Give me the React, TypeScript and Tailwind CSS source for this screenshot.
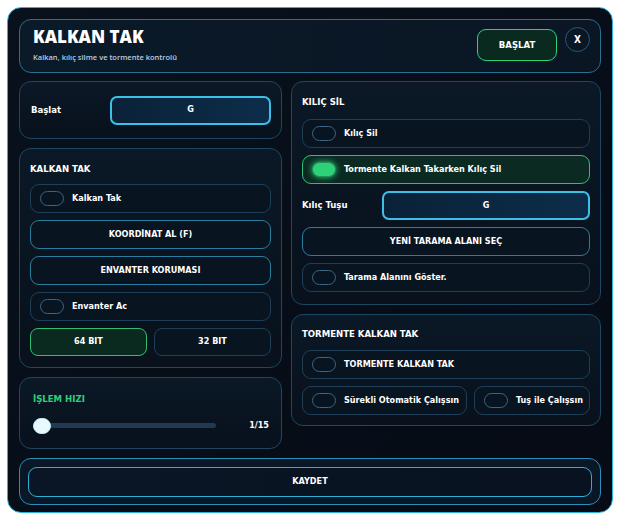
import React from "react";

const font = { fontFamily: '"DejaVu Sans Condensed", "DejaVu Sans", sans-serif' };
const titleFont = { fontFamily: '"Open Sans", "Noto Sans", sans-serif' };

function Toggle({ on = false }: { on?: boolean }) {
  return on ? (
    <span className="inline-block w-[24px] h-[15px] rounded-full bg-[#2fd07a] border border-[#1f8f52] shadow-[0_0_6px_#2fd07a] shrink-0" />
  ) : (
    <span className="inline-block w-[24px] h-[15px] rounded-full border border-[#3a6684] shrink-0" />
  );
}

function ToggleRow({ label, on = false, className = "" }: { label: string; on?: boolean; className?: string }) {
  return (
    <div
      className={
        "h-[29px] rounded-[9px] border flex items-center pl-[9px] gap-[8px] whitespace-nowrap " +
        (on ? "border-[#2fbf74] bg-[#0b2a22] " : "border-[#1f3f58] bg-[#081420] ") +
        className
      }
    >
      <Toggle on={on} />
      <span className="text-[9px] font-bold text-white">{label}</span>
    </div>
  );
}

function Btn({ label, className = "" }: { label: string; className?: string }) {
  return (
    <div
      className={
        "h-[29px] rounded-[9px] border border-[#2a7d9f] bg-[#081420] flex items-center justify-center text-[9px] font-bold text-white " +
        className
      }
    >
      {label}
    </div>
  );
}

function KeyInput({ className = "" }: { className?: string }) {
  return (
    <div
      className={
        "h-[29px] rounded-[7px] border-2 border-[#3cc0e8] bg-gradient-to-r from-[#0a2238] to-[#0c2d4a] flex items-center justify-center text-[9px] font-bold text-white " +
        className
      }
    >
      G
    </div>
  );
}

function Card({ children, className = "" }: { children: React.ReactNode; className?: string }) {
  return (
    <div
      className={
        "rounded-[12px] border border-[#1d4763] bg-gradient-to-b from-[#0b1826] to-[#08111c] " + className
      }
    >
      {children}
    </div>
  );
}

export default function App() {
  return (
    <div className="w-[620px] h-[520px] bg-white p-[7px]" style={font}>
      <div className="w-[606px] h-[506px] rounded-[14px] border border-[#2ab3d8] bg-gradient-to-br from-[#08111c] to-[#060b15] px-[11px] pt-[11px] flex flex-col">
        {/* Header */}
        <div className="h-[54px] rounded-[12px] border border-[#2a6f92] bg-gradient-to-r from-[#0a1a29] to-[#0a1624] flex items-center pl-[13px] pr-[10px]">
          <div className="flex-1 flex flex-col">
            <div className="text-[17px] font-extrabold text-white leading-[20px] mt-[-1px]" style={titleFont}>KALKAN TAK</div>
            <div className="text-[7.5px] font-semibold text-[#b9cce0] mt-[5px]" style={titleFont}>Kalkan, kılıç silme ve tormente kontrolü</div>
          </div>
          <div className="w-[80px] h-[32px] rounded-[9px] border border-[#2fd07a] bg-[#0a2a20] flex items-center justify-center text-[9.5px] font-bold text-white mt-[-2px]">
            BAŞLAT
          </div>
          <div className="ml-[8px] w-[25px] h-[25px] rounded-full border border-[#2a5876] flex items-center justify-center text-[10px] font-extrabold text-white mt-[-14px]">
            X
          </div>
        </div>

        <div className="flex gap-[9px] mt-[8px]">
          {/* Left column */}
          <div className="w-[263px] flex flex-col gap-[9px]">
            <Card className="h-[58px] flex items-center pl-[11px] pr-[10px]">
              <span className="text-[9.5px] font-bold text-white w-[79px]">Başlat</span>
              <KeyInput className="flex-1" />
            </Card>

            <Card className="h-[220px] px-[10px] pt-[14px]">
              <div className="text-[9.5px] font-bold text-white leading-[12px]">KALKAN TAK</div>
              <div className="flex flex-col gap-[7px] mt-[9px]">
                <ToggleRow label="Kalkan Tak" />
                <Btn label="KOORDİNAT AL (F)" />
                <Btn label="ENVANTER KORUMASI" />
                <ToggleRow label="Envanter Ac" />
                <div className="flex gap-[7px]">
                  <div className="flex-1 h-[28px] rounded-[8px] border border-[#2fbf74] bg-[#0a2a20] flex items-center justify-center text-[9px] font-bold text-white">
                    64 BIT
                  </div>
                  <div className="flex-1 h-[28px] rounded-[8px] border border-[#1f3f58] bg-[#081420] flex items-center justify-center text-[9px] font-bold text-white">
                    32 BIT
                  </div>
                </div>
              </div>
            </Card>

            <Card className="h-[72px] pl-[13px] pr-[12px] pt-[15px]">
              <div className="text-[9.5px] font-bold text-[#2fcf7c] leading-[12px]">İŞLEM HIZI</div>
              <div className="flex items-center mt-[14px]">
                <div className="relative w-[183px] h-[5px] rounded-full bg-[#1f3a52]">
                  <span className="absolute left-0 top-1/2 -translate-y-1/2 w-[18px] h-[16px] rounded-full bg-[#e9faff] border border-[#bfeaf7]" />
                </div>
                <span className="ml-auto text-[9px] font-bold text-white">1/15</span>
              </div>
            </Card>
          </div>

          {/* Right column */}
          <div className="flex-1 flex flex-col gap-[9px]">
            <Card className="h-[224px] px-[10px] pt-[14px]">
              <div className="text-[9.5px] font-bold text-white leading-[12px]">KILIÇ SİL</div>
              <div className="flex flex-col gap-[7px] mt-[11px]">
                <ToggleRow label="Kılıç Sil" />
                <ToggleRow label="Tormente Kalkan Takarken Kılıç Sil" on />
                <div className="flex items-center">
                  <span className="text-[9.5px] font-bold text-white w-[80px]">Kılıç Tuşu</span>
                  <KeyInput className="flex-1" />
                </div>
                <Btn label="YENİ TARAMA ALANI SEÇ" />
                <ToggleRow label="Tarama Alanını Göster." />
              </div>
            </Card>

            <Card className="h-[112px] px-[10px] pt-[13px]">
              <div className="text-[9.5px] font-bold text-white leading-[12px]">TORMENTE KALKAN TAK</div>
              <div className="flex flex-col gap-[7px] mt-[10px]">
                <ToggleRow label="TORMENTE KALKAN TAK" />
                <div className="flex gap-[7px]">
                  <ToggleRow label="Sürekli Otomatik Çalışsın" className="w-[165px]" />
                  <ToggleRow label="Tuş ile Çalışsın" className="flex-1" />
                </div>
              </div>
            </Card>
          </div>
        </div>

        <div className="mt-auto mb-[7px] h-[47px] rounded-[12px] border border-[#2a8fb8] bg-[#0a1726] flex items-center px-[8px]">
          <div className="flex-1 h-[30px] rounded-[9px] border border-[#2ab0d8] bg-gradient-to-r from-[#0a1626] to-[#081220] flex items-center justify-center text-[9px] font-bold text-white">
            KAYDET
          </div>
        </div>
      </div>
    </div>
  );
}
